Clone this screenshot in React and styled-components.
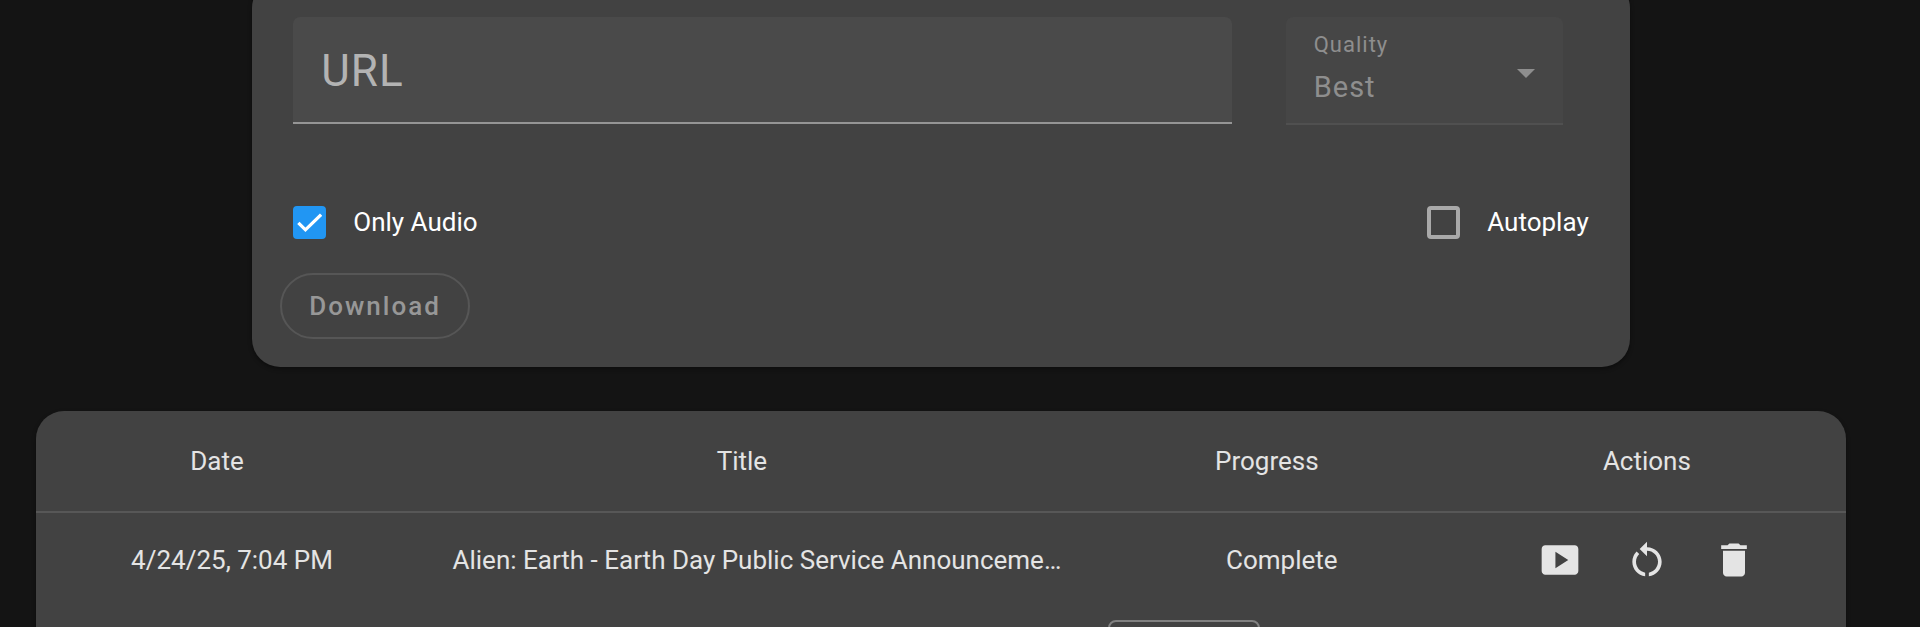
import { useState } from 'react';
import styled, { createGlobalStyle } from 'styled-components';
import { MdDelete, MdRestartAlt, MdSmartDisplay } from 'react-icons/md';

const GlobalStyle = createGlobalStyle`
  * {
    box-sizing: border-box;
  }
  body {
    margin: 0;
    background-color: #141414;
    font-family: Roboto, sans-serif;
    scrollbar-width: none;
  }
`;

const Page = styled.main`
  display: flex;
  flex-direction: column;
  align-items: center;
  gap: 44px;
  padding: 0 74px 0 36px;
`;
const Card = styled.section`
  background-color: #424242;
  border-radius: 28px;
  box-shadow: 0 2px 4px rgba(0, 0, 0, 0.4);
`;
const FormCard = styled(Card)`
  width: 76.1%;
  margin-top: -20px;
  padding: 37px 41px 28px;
`;
const Fields = styled.div`
  display: flex;
  gap: 54px;
  padding-right: 26px;
`;
const UrlInput = styled.input`
  flex: 1;
  min-width: 0;
  height: 107px;
  padding: 2px 28px 0;
  border: none;
  border-bottom: 2px solid #959595;
  border-radius: 7px 7px 0 0;
  background-color: #4a4a4a;
  color: #fff;
  font-family: inherit;
  font-size: 44px;
  letter-spacing: 1px;
  outline: none;
  &::placeholder {
    color: #b3b3b3;
    opacity: 1;
  }
`;
const QualityField = styled.div`
  display: grid;
  grid-template-columns: 1fr auto;
  grid-template-rows: 28px 1fr;
  align-items: center;
  width: 277px;
  height: 108px;
  padding: 14px 28px 8px;
  border-bottom: 2px solid #505050;
  border-radius: 7px 7px 0 0;
  background-color: #464646;
  color: #8e8e8e;
`;
const QualityLabel = styled.label`
  font-size: 22px;
  line-height: 28px;
  letter-spacing: 1px;
`;
const QualitySelect = styled.select`
  grid-row: 2;
  appearance: none;
  padding: 0;
  border: none;
  background: none;
  color: inherit;
  opacity: 1;
  font-family: inherit;
  font-size: 29px;
  line-height: 44px;
  letter-spacing: 1px;
`;
const Arrow = styled.svg`
  grid-column: 2;
  grid-row: 1 / 3;
  width: 18px;
  height: 9px;
  fill: #8e8e8e;
`;
const Options = styled.div`
  display: flex;
  justify-content: space-between;
  margin-top: 73px;
`;
const CheckLabel = styled.label`
  display: flex;
  align-items: center;
  gap: 27px;
  height: 48px;
  color: #fff;
  font-size: 26px;
  cursor: pointer;
`;
const Checkbox = styled.input`
  appearance: none;
  display: grid;
  place-items: center;
  width: 33px;
  height: 33px;
  margin: 0;
  border: 4px solid #a9a9a9;
  border-radius: 4px;
  cursor: pointer;
  &:checked {
    border-color: #2196f3;
    background: #2196f3
      url("data:image/svg+xml,%3Csvg xmlns='http://www.w3.org/2000/svg' viewBox='0 0 24 24'%3E%3Cpath fill='none' stroke='white' stroke-width='3' d='M1.7 12.7 8.1 19.1 22.3 4.9'/%3E%3C/svg%3E")
      center / 26px no-repeat border-box;
  }
`;
const DownloadButton = styled.button`
  height: 66px;
  margin: 27px 0 0 -13px;
  padding: 0 27px;
  border: 2px solid #565656;
  border-radius: 33px;
  background: none;
  color: #979797;
  font-family: inherit;
  font-size: 26px;
  font-weight: 500;
  letter-spacing: 2px;
`;
const TableCard = styled(Card)`
  width: 100%;
`;
const Table = styled.table`
  width: 100%;
  table-layout: fixed;
  border-collapse: collapse;
  color: #e4e4e4;
  font-size: 26px;
  text-align: center;
`;
const HeadCell = styled.th`
  width: ${({ width }) => width};
  height: 101px;
  padding: 0;
  border-bottom: 2px solid #575757;
  font-weight: 400;
`;
const Cell = styled.td`
  height: 94px;
  padding: 0 18px 0 48px;
  overflow: hidden;
  text-overflow: ellipsis;
  white-space: nowrap;
`;
const ActionsCell = styled.td`
  padding: 0;
`;
const Actions = styled.div`
  display: flex;
  justify-content: center;
`;
const IconButton = styled.button`
  display: flex;
  align-items: center;
  justify-content: center;
  width: 87px;
  height: 88px;
  padding: 0;
  border: none;
  background: none;
  color: inherit;
  font-size: 44px;
  cursor: pointer;
`;
const Paginator = styled.footer`
  display: flex;
  justify-content: flex-end;
  padding: 14px 586px 14px 0;
`;
const PageSize = styled.select`
  appearance: none;
  width: 152px;
  height: 74px;
  padding: 0 20px;
  border: 2px solid #818181;
  border-radius: 8px;
  background: none;
  color: #fff;
  font-family: inherit;
  font-size: 22px;
`;

const columns = [
  { name: 'Date', width: '20%' },
  { name: 'Title', width: '38%' },
  { name: 'Progress', width: '20%' },
  { name: 'Actions', width: '22%' },
];

const downloads = [
  {
    date: '4/24/25, 7:04 PM',
    title: 'Alien: Earth - Earth Day Public Service Announceme…',
    progress: 'Complete',
  },
];

function DownloadForm() {
  const [url, setUrl] = useState('');
  const [onlyAudio, setOnlyAudio] = useState(true);
  const [autoplay, setAutoplay] = useState(false);

  return (
    <FormCard>
      <Fields>
        <UrlInput
          type="text"
          placeholder="URL"
          aria-label="URL"
          value={url}
          onChange={(e) => setUrl(e.target.value)}
        />
        <QualityField>
          <QualityLabel htmlFor="quality">Quality</QualityLabel>
          <QualitySelect id="quality" disabled={onlyAudio}>
            <option>Best</option>
          </QualitySelect>
          <Arrow viewBox="0 0 10 5">
            <path d="M0 0h10L5 5z" />
          </Arrow>
        </QualityField>
      </Fields>
      <Options>
        <CheckLabel>
          <Checkbox
            type="checkbox"
            checked={onlyAudio}
            onChange={(e) => setOnlyAudio(e.target.checked)}
          />
          Only Audio
        </CheckLabel>
        <CheckLabel>
          <Checkbox
            type="checkbox"
            checked={autoplay}
            onChange={(e) => setAutoplay(e.target.checked)}
          />
          Autoplay
        </CheckLabel>
      </Options>
      <DownloadButton type="button" disabled={!url}>
        Download
      </DownloadButton>
    </FormCard>
  );
}

function DownloadRow({ download }) {
  return (
    <tr>
      <Cell>{download.date}</Cell>
      <Cell>{download.title}</Cell>
      <Cell>{download.progress}</Cell>
      <ActionsCell>
        <Actions>
          <IconButton type="button" aria-label="Watch">
            <MdSmartDisplay />
          </IconButton>
          <IconButton type="button" aria-label="Restart">
            <MdRestartAlt />
          </IconButton>
          <IconButton type="button" aria-label="Delete">
            <MdDelete />
          </IconButton>
        </Actions>
      </ActionsCell>
    </tr>
  );
}

function App() {
  return (
    <>
      <GlobalStyle />
      <Page>
        <DownloadForm />
        <TableCard>
          <Table>
            <thead>
              <tr>
                {columns.map(({ name, width }) => (
                  <HeadCell key={name} width={width}>
                    {name}
                  </HeadCell>
                ))}
              </tr>
            </thead>
            <tbody>
              {downloads.map((download) => (
                <DownloadRow key={download.title} download={download} />
              ))}
            </tbody>
          </Table>
          <Paginator>
            <PageSize aria-label="Items per page">
              <option>5</option>
            </PageSize>
          </Paginator>
        </TableCard>
      </Page>
    </>
  );
}

export default App;
